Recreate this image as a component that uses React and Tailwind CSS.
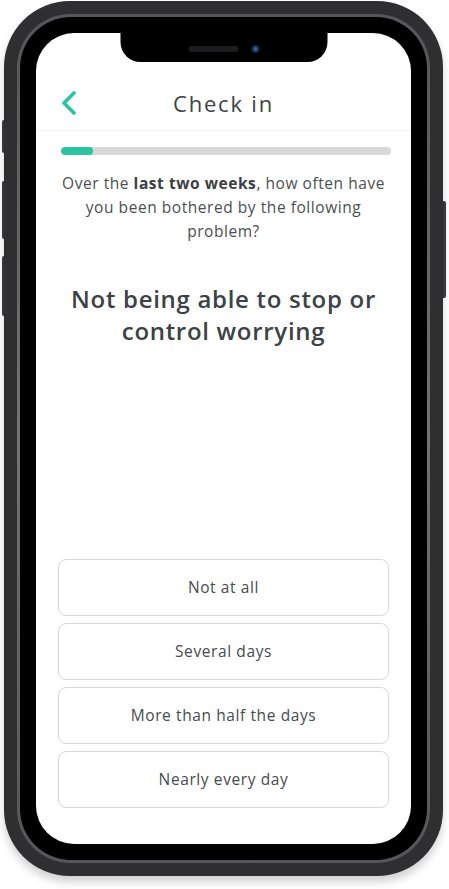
import React from "react";

const options = ["Not at all", "Several days", "More than half the days", "Nearly every day"];

export default function App() {
  return (
    <div className="w-[449px] h-[889px] bg-white overflow-hidden" style={{ fontFamily: '"Open Sans", "Noto Sans", sans-serif' }}>
      <div className="relative ml-[4px] mt-[1px] w-[439px] h-[875px]">
        {/* side buttons */}
        <div className="absolute left-[-2px] top-[119px] w-[4px] h-[33px] rounded-l-[2px] bg-[#3c3c3f]" />
        <div className="absolute left-[-2px] top-[180px] w-[4px] h-[58px] rounded-l-[2px] bg-[#3c3c3f]" />
        <div className="absolute left-[-2px] top-[255px] w-[4px] h-[60px] rounded-l-[2px] bg-[#3c3c3f]" />
        <div className="absolute right-[-3px] top-[200px] w-[4px] h-[97px] rounded-r-[2px] bg-[#3c3c3f]" />
        {/* frame */}
        <div className="relative h-full rounded-[66px] bg-[#2f2f32] p-[13px] shadow-[0_6px_8px_rgba(0,0,0,0.18)]">
          <div className="h-full rounded-[54px] bg-gradient-to-b from-[#55555a] via-[#737377] to-[#55555a] p-[3px]">
            <div className="h-full rounded-[51px] bg-black p-[16px]">
              <div className="relative h-full rounded-[38px] bg-white overflow-hidden flex flex-col">
                {/* notch */}
                <div className="absolute left-1/2 top-0 -translate-x-1/2 w-[207px] h-[29px] bg-black rounded-b-[20px] flex items-center justify-center gap-[13px] pt-[2px]">
                  <div className="w-[50px] h-[6px] rounded-full bg-[#1c1c1e]" />
                  <div className="w-[8px] h-[8px] rounded-full bg-[#1a2a4a] flex items-center justify-center">
                    <div className="w-[4px] h-[4px] rounded-full bg-[#2f5fa8]" />
                  </div>
                </div>
                {/* header */}
                <div className="h-[98px] flex flex-col justify-end border-b border-[#f0f0f0] shrink-0">
                  <div className="h-[54px] grid grid-cols-[1fr_auto_1fr] items-center px-[25px]">
                    <svg width="16" height="24" viewBox="0 0 16 24" fill="none">
                      <path d="M13 2 L3 12 L13 22" stroke="#2bc4a3" strokeWidth="3.6" strokeLinecap="round" strokeLinejoin="round" />
                    </svg>
                    <div className="text-[22px] text-[#3d4347] tracking-[1.8px]">Check in</div>
                    <div />
                  </div>
                </div>
                {/* progress */}
                <div className="mt-[16px] ml-[25px] mr-[20px] h-[8px] rounded-full bg-[#d8d8d8] overflow-hidden shrink-0">
                  <div className="h-full w-[32px] rounded-full bg-[#2bc4a3]" />
                </div>
                <p className="mt-[16px] px-[10px] text-center text-[15.5px] leading-[24px] tracking-[0.55px] text-[#4a4f52]">
                  Over the <span className="font-bold text-[#3a3f42]">last two weeks</span>, how often have
                  <br />
                  you been bothered by the following
                  <br />
                  problem?
                </p>
                <h1 className="mt-[40px] px-[10px] text-center text-[24px] leading-[32px] font-semibold tracking-[0.7px] text-[#3c4245]">
                  Not being able to stop or
                  <br />
                  control worrying
                </h1>
                <div className="flex-1" />
                <div className="flex flex-col gap-[7px] px-[22px] pb-[36px]">
                  {options.map((o) => (
                    <div key={o} className="h-[57px] rounded-[8px] border border-[#d6d9d9] flex items-center justify-center text-[15.5px] tracking-[0.6px] text-[#464b4e]">
                      {o}
                    </div>
                  ))}
                </div>
              </div>
            </div>
          </div>
        </div>
      </div>
    </div>
  );
}
